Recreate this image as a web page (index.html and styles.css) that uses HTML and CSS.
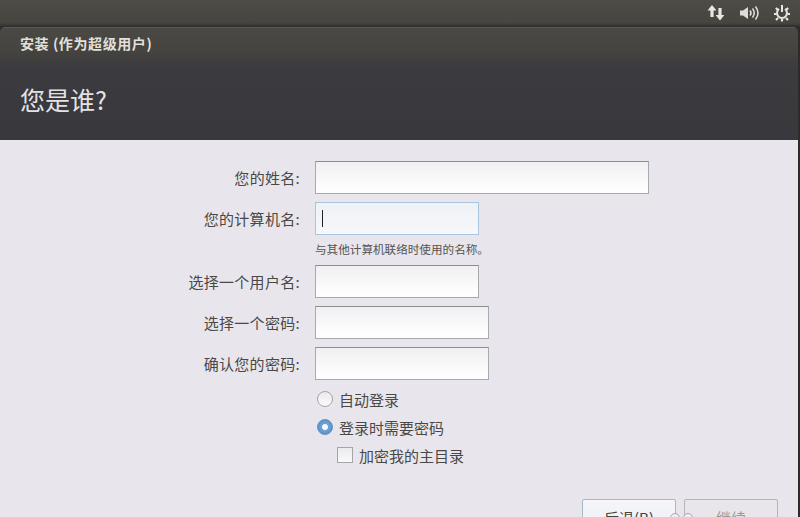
FILE: index.html
```html
<!DOCTYPE html>
<html lang="zh">
<head>
<meta charset="utf-8">
<title>安装</title>
<link rel="stylesheet" href="styles.css">
</head>
<body>
<div class="panel">
  <svg class="ic ic-net" viewBox="0 0 18 16" width="18" height="16"><path d="M5 0 L0.5 5.5 H3.4 V12 H6.6 V5.5 H9.5 Z M11.4 3 V10 H8.6 L13 15.5 L17.4 10 H14.6 V3 Z" fill="#e8e6de"/></svg>
  <svg class="ic ic-vol" viewBox="0 0 22 16" width="22" height="16"><path d="M1 5.5 H4 L9 2 V14 L4 10.5 H1 Z" fill="#dedcd4"/><g fill="none" stroke="#dedcd4"><path d="M11 5.5 Q13 8 11 10.5" stroke-width="1.6"/><path d="M13.5 3.5 Q17 8 13.5 12.5" stroke-width="1.6"/><path d="M16.5 1.5 Q21.5 8 16.5 14.5" stroke-width="1.6"/></g></svg>
  <svg class="ic ic-gear" viewBox="0 0 18 18" width="18" height="18"><g fill="none" stroke="#e8e6de"><path d="M6 5 A5 5 0 1 0 12 5" stroke-width="2"/><path d="M9 1 V8" stroke-width="2"/><path d="M1 10 H3.5 M14.5 10 H17 M2.8 4 L5 5.8 M15.2 4 L13 5.8 M3 16 L5 14 M15 16 L13 14 M9 15 V17.5" stroke-width="2.2"/></g></svg>
</div>
<main class="window">
  <header class="head">
    <div class="title">安装 (作为超级用户)</div>
    <h1 class="page-title">您是谁?</h1>
  </header>
  <section class="body">
    <div class="form">
      <label class="lbl">您的姓名:</label>
      <div class="field w-lg"></div>
      <label class="lbl">您的计算机名:</label>
      <div class="field w-sm focus"><span class="caret"></span></div>
      <div class="hint">与其他计算机联络时使用的名称。</div>
      <label class="lbl">选择一个用户名:</label>
      <div class="field w-sm"></div>
      <label class="lbl">选择一个密码:</label>
      <div class="field w-md"></div>
      <label class="lbl">确认您的密码:</label>
      <div class="field w-md"></div>
      <div class="options">
        <div class="opt"><span class="radio"></span>自动登录</div>
        <div class="opt"><span class="radio on"></span>登录时需要密码</div>
        <div class="opt sub"><span class="check"></span>加密我的主目录</div>
      </div>
    </div>
    <div class="actions">
      <button class="btn back">后退(B)</button>
      <button class="btn next">继续</button>
      <span class="dot d1"></span>
      <span class="dot d2"></span>
    </div>
  </section>
</main>
</body>
</html>
```
FILE: styles.css
```css
* { box-sizing: border-box; }
html, body { margin: 0; height: 517px; overflow: hidden; }
body {
  width: 800px;
  background: #2c2b2a;
  font-family: "Noto Sans CJK SC", "Liberation Sans", sans-serif;
  display: flex;
  flex-direction: column;
}
.panel {
  height: 27px;
  flex: none;
  background: linear-gradient(#4e4c46, #46453f 85%, #2d2c2c);
  display: flex;
  align-items: center;
  justify-content: flex-end;
  padding: 0 9px 2px 0;
}
.ic { display: block; flex: none; }
.ic-net { margin-right: 14px; }
.ic-vol { margin-right: 12px; }
.window {
  flex: 1;
  margin-right: 2px;
  display: flex;
  flex-direction: column;
  min-height: 0;
  border-radius: 5px 5px 0 0;
  overflow: hidden;
}
.head {
  height: 113px;
  flex: none;
  background: linear-gradient(#4a4945 0, #45443f 22px, #3b3a3e 42px, #39383c 100%);
  border-top: 1px solid #5a5a5c;
  padding: 6px 20px 0;
  color: #e6e4e4;
}
.title { font-size: 14px; font-weight: 700; letter-spacing: 0.6px; line-height: 18px; color: #e2e0dc; }
.page-title { margin: 29px 0 0; font-size: 25px; font-weight: 400; line-height: 36px; color: #e4e2e6; }
.body {
  flex: 1;
  background: #e8e6ec;
  position: relative;
  padding-top: 21px;
}
.form {
  display: grid;
  grid-template-columns: 300px auto;
  column-gap: 15px;
  justify-content: start;
  align-items: center;
  color: #4a4846;
  font-size: 15px;
}
.lbl { text-align: right; line-height: 33px; letter-spacing: 0.3px; white-space: nowrap; margin-bottom: 8px; }
.field {
  height: 33px;
  margin-bottom: 8px;
  border: 1px solid #a9a8aa;
  border-top-color: #8e8d90;
  background: linear-gradient(#f0eff2, #fdfdfd 80%);
  display: flex;
  align-items: center;
}
.w-lg { width: 334px; }
.w-md { width: 174px; }
.w-sm { width: 164px; }
.focus {
  border-color: #a8c4df;
  background: linear-gradient(#eef1f6, #f6f8fb);
}
.caret { width: 1px; height: 17px; margin-left: 6px; background: #222; }
.hint {
  grid-column: 2;
  font-size: 11.6px;
  line-height: 16px;
  color: #55534f;
  margin: -2px 0 8px;
}
.options {
  grid-column: 2;
  display: flex;
  flex-direction: column;
  font-size: 15px;
  margin-top: -3px;
}
.opt { display: flex; align-items: center; height: 28px; padding-left: 2px; }
.opt.sub { padding-left: 22px; }
.radio {
  width: 16px;
  height: 16px;
  margin-right: 6px;
  border-radius: 50%;
  border: 1px solid #a5a4a6;
  background: linear-gradient(#eceaec, #fbfbfb);
  flex: none;
}
.radio.on {
  border-color: #5f8fbf;
  background: radial-gradient(circle, #f4f8fc 0 2.5px, #6fa3d6 3.5px, #4f86bd 100%);
}
.check {
  width: 16px;
  height: 16px;
  margin-right: 6px;
  border: 1px solid #a5a4a6;
  background: linear-gradient(#eceaec, #f9f9f9);
  flex: none;
}
.actions {
  position: absolute;
  top: 359px;
  left: 582px;
  display: flex;
  gap: 8px;
}
.btn {
  width: 94px;
  height: 40px;
  padding: 0 0 4px;
  font: 15px/1 "Noto Sans CJK SC", "Liberation Sans", sans-serif;
  color: #45433f;
  border: 1px solid #a9b6c6;
  background: linear-gradient(#f4f6fa, #eceef3);
  border-radius: 2px;
  display: block;
}
.btn.next { border-color: #b6b4b6; background: #e8e6ea; color: #9a989a; }
.dot {
  position: absolute;
  top: 14px;
  width: 10px;
  height: 10px;
  border-radius: 50%;
  border: 1px solid #a9a8ac;
  background: #efeef2;
}
.d1 { left: 88px; }
.d2 { left: 101px; }
```
